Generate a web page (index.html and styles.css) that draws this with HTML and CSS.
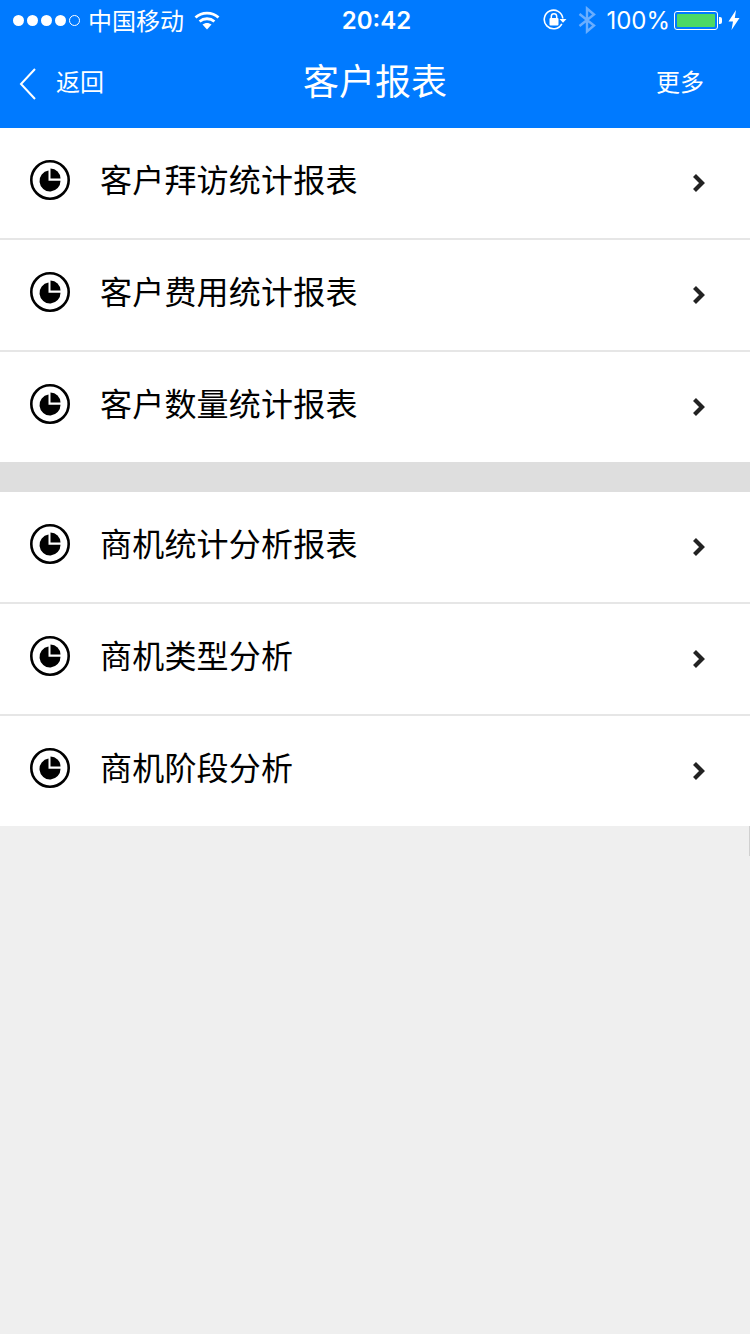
FILE: index.html
```html
<!DOCTYPE html>
<html lang="zh-CN">

<head>
  <meta charset="UTF-8">
  <meta name="viewport" content="width=device-width, initial-scale=1.0">
  <title>客户报表</title>
  <link rel="stylesheet" href="styles.css">
</head>

<body>
  <svg class="defs" width="0" height="0">
    <symbol id="pie" viewBox="0 0 40 40">
      <circle cx="20" cy="20" r="18.700" fill="none" stroke="#000" stroke-width="2.600" />
      <path d="M18.500 10.600A10.500 10.500 0 1 0 30.500 20.800H18.500Z" fill="#000" />
      <path d="M20.500 8.500A10 10 0 0 1 30.500 18.500H20.500Z" fill="#000" />
    </symbol>
    <symbol id="arrow" viewBox="0 0 14 20">
      <path d="M2.500 2.500 10 10 2.500 17.500" fill="none" stroke="#222" stroke-width="4.200" />
    </symbol>
  </svg>

  <header class="header">
    <div class="status-bar">
      <div class="status-left">
        <span class="signal">
          <i class="dot"></i><i class="dot"></i><i class="dot"></i><i class="dot"></i><i class="dot empty"></i>
        </span>
        <span class="carrier">中国移动</span>
        <svg class="wifi" width="26" height="20" viewBox="0 0 26 20">
          <path d="M1.500 7.500C7.800 1.600 18.200 1.600 24.500 7.500" fill="none" stroke="#fff" stroke-width="2.800" />
          <path d="M5.600 11.500C9.800 7.800 16.200 7.800 20.400 11.500" fill="none" stroke="#fff" stroke-width="2.800" />
          <path d="M8.500 14.600C11 12.400 15 12.400 17.500 14.600L13 19.500Z" fill="#fff" />
        </svg>
      </div>
      <div class="time">20:42</div>
      <div class="status-right">
        <svg class="rotation" width="24" height="22" viewBox="0 0 24 22">
          <path d="M18.800 14.800A9.300 9.300 0 1 1 19.800 9.500" fill="none" stroke="#fff" stroke-width="1.600" />
          <path d="M16.500 10h7l-3.500 3.800Z" fill="#fff" />
          <rect x="6.500" y="9" width="9" height="7.500" rx="1" fill="#fff" />
          <path d="M8.300 9.500V7.500a2.700 2.700 0 0 1 5.400 0v2" fill="none" stroke="#fff" stroke-width="1.500" />
        </svg>
        <svg class="bluetooth" width="18" height="28" viewBox="0 0 18 28">
          <path d="M1.500 8 16 19.500 9 25.500V2.500L16 8.500 1.500 20" fill="none" stroke="#6aaeff" stroke-width="2.400" />
        </svg>
        <span class="percent">100%</span>
        <span class="battery"><span class="battery-fill"></span></span>
        <span class="battery-cap"></span>
        <svg class="bolt" width="12" height="20" viewBox="0 0 12 20">
          <path d="M8 0 .5 11.500H5L3.500 20 11.500 8H6.800Z" fill="#fff" />
        </svg>
      </div>
    </div>

    <nav class="nav-bar">
      <div class="nav-back">
        <svg class="back-icon" width="20" height="42" viewBox="0 0 20 42">
          <path d="M17 10 3 25 17 40" fill="none" stroke="#fff" stroke-width="2" />
        </svg>
        <span>返回</span>
      </div>
      <h1 class="nav-title">客户报表</h1>
      <div class="nav-more">更多</div>
    </nav>
  </header>

  <ul class="list">
    <li class="item"><svg class="pie"><use href="#pie" /></svg><span class="label">客户拜访统计报表</span><svg class="arrow"><use href="#arrow" /></svg></li>
    <li class="item"><svg class="pie"><use href="#pie" /></svg><span class="label">客户费用统计报表</span><svg class="arrow"><use href="#arrow" /></svg></li>
    <li class="item"><svg class="pie"><use href="#pie" /></svg><span class="label">客户数量统计报表</span><svg class="arrow"><use href="#arrow" /></svg></li>
  </ul>

  <ul class="list list-second">
    <li class="item"><svg class="pie"><use href="#pie" /></svg><span class="label">商机统计分析报表</span><svg class="arrow"><use href="#arrow" /></svg></li>
    <li class="item"><svg class="pie"><use href="#pie" /></svg><span class="label">商机类型分析</span><svg class="arrow"><use href="#arrow" /></svg></li>
    <li class="item"><svg class="pie"><use href="#pie" /></svg><span class="label">商机阶段分析</span><svg class="arrow"><use href="#arrow" /></svg></li>
  </ul>

  <div class="scroll-mark"></div>
</body>

</html>
```

FILE: styles.css
```css
* {
  box-sizing: border-box;
}

html,
body {
  height: 100%;
}

body {
  position: relative;
  margin: 0;
  background: #efefef;
  font-family: "Noto Sans CJK SC", "Inter", sans-serif;
  overflow: hidden;
}

.defs {
  display: block;
  height: 0;
}

.header {
  height: 128px;
  background: #007aff;
  color: white;
}

.status-bar {
  display: grid;
  grid-template-columns: 1fr auto 1fr;
  align-items: center;
  height: 40px;
  padding: 0 10px 0 13px;
}

.status-left,
.status-right {
  display: flex;
  align-items: center;
}

.status-right {
  justify-content: flex-end;
}

.signal {
  display: flex;
  gap: 3px;
}

.dot {
  width: 11px;
  height: 11px;
  border-radius: 50%;
  background: white;
}

.dot.empty {
  background: none;
  border: 1px solid white;
}

.carrier {
  margin-left: 8px;
  font-size: 24px;
  line-height: 40px;
}

.wifi {
  margin-left: 10px;
}

.time {
  font-family: "Inter", sans-serif;
  font-size: 24px;
  font-weight: 600;
}

.bluetooth {
  margin-left: 11px;
}

.percent {
  margin-left: 10px;
  font-family: "Inter", sans-serif;
  font-size: 24px;
}

.battery {
  width: 44px;
  height: 19px;
  margin-left: 4px;
  padding: 2px;
  border: 1px solid white;
  border-radius: 3px;
}

.battery-fill {
  display: block;
  height: 100%;
  background: #4cd964;
  border-radius: 1px;
}

.battery-cap {
  width: 3px;
  height: 7px;
  margin-left: 1px;
  background: white;
  border-radius: 0 2px 2px 0;
}

.bolt {
  margin-left: 6px;
}

.nav-bar {
  display: grid;
  grid-template-columns: 1fr auto 1fr;
  align-items: center;
  height: 88px;
  padding: 0 18px 8px;
}

.nav-back {
  display: flex;
  align-items: center;
  font-size: 24px;
}

.back-icon {
  margin-right: 18px;
}

.nav-title {
  margin: 0 0 2px;
  font-size: 36px;
  font-weight: 400;
}

.nav-more {
  margin-right: 28px;
  font-size: 24px;
  text-align: right;
}

.list {
  margin: 0;
  padding: 0;
  list-style: none;
  background: white;
}

.list-second {
  border-top: 30px solid #dedede;
}

.item {
  display: flex;
  align-items: center;
  height: 112px;
  padding: 0 44px 6px 30px;
  border-bottom: 2px solid #e6e6e6;
}

.item:last-child {
  height: 110px;
  border-bottom: none;
}

.pie {
  flex: none;
  width: 40px;
  height: 40px;
}

.label {
  flex: 1;
  margin: 0 0 4px 30px;
  font-size: 32px;
  letter-spacing: 0.2px;
  color: black;
}

.arrow {
  flex: none;
  width: 14px;
  height: 20px;
  margin-top: 6px;
}

.scroll-mark {
  position: absolute;
  top: 826px;
  right: 0;
  width: 1px;
  height: 30px;
  background: #d0d0d0;
}
```
